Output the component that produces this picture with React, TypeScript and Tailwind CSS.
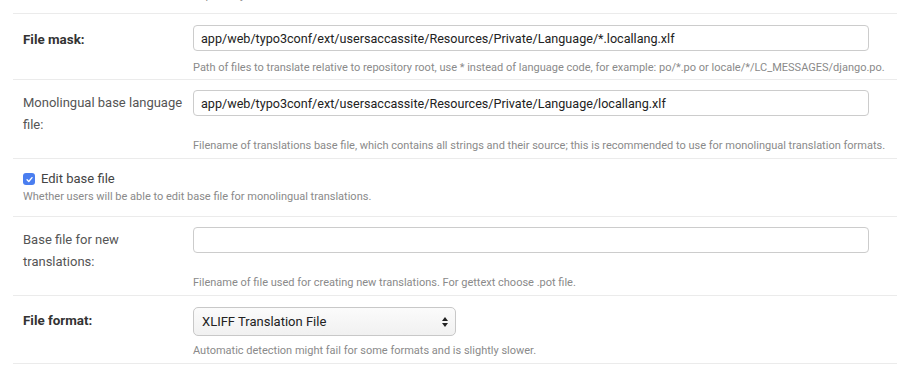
import React from 'react';

const font = { fontFamily: 'Roboto, "Liberation Sans", sans-serif' };

const Help: React.FC<{ children: React.ReactNode }> = ({ children }) => (
  <p className="whitespace-nowrap text-[11px] leading-[14px] text-[#8a8a8a]">{children}</p>
);

const TextField: React.FC<{ value?: string }> = ({ value = '' }) => (
  <input
    readOnly
    value={value}
    className="h-[26px] w-[676px] rounded-[4px] border border-[#cccccc] bg-white px-[7px] text-[12.6px] text-[#222] outline-none"
  />
);

type RowProps = {
  label: string;
  bold?: boolean;
  help: string;
  control: React.ReactNode;
  className?: string;
};

const Row: React.FC<RowProps> = ({ label, bold, help, control, className = '' }) => (
  <div className={`grid grid-cols-[170px_1fr] border-b border-[#ebebeb] pl-[10px] ${className}`}>
    <label
      className={`pr-[2px] leading-[22px] ${bold ? 'text-[13.4px] font-bold text-[#333]' : 'text-[13px] text-[#555]'}`}
    >
      {label}
    </label>
    <div>{control}</div>
    <div />
    <Help>{help}</Help>
  </div>
);

export default function App() {
  return (
    <div className="h-[373px] w-[897px] overflow-hidden bg-white" style={font}>
      <div className="ml-[13px]">
        {/* row above, mostly scrolled out of view */}
        <div className="h-[14px] overflow-hidden border-b border-[#ebebeb] pl-[180px]">
          <div className="-mt-[11px]">
            <Help>Repository branch to translate.</Help>
          </div>
        </div>

        <Row
          bold
          label="File mask:"
          className="h-[66px] pt-[11px] [&>label]:pt-[4px] [&>p]:pt-[5px]"
          control={<TextField value="app/web/typo3conf/ext/usersaccassite/Resources/Private/Language/*.locallang.xlf" />}
          help="Path of files to translate relative to repository root, use * instead of language code, for example: po/*.po or locale/*/LC_MESSAGES/django.po."
        />

        <Row
          label="Monolingual base language file:"
          className="h-[79px] pt-[10px] [&>label]:pt-[2px] [&>p]:-mt-[2px]"
          control={<TextField value="app/web/typo3conf/ext/usersaccassite/Resources/Private/Language/locallang.xlf" />}
          help="Filename of translations base file, which contains all strings and their source; this is recommended to use for monolingual translation formats."
        />

        <div className="h-[58px] border-b border-[#ebebeb] pl-[10px] pt-[9px]">
          <div className="flex items-center gap-[6px]">
            <span className="flex h-[12px] w-[12px] items-center justify-center rounded-[3px] bg-[#4a7ef0]">
              <svg viewBox="0 0 10 10" className="h-[9px] w-[9px]">
                <path d="M2.3 5.3 L4.2 7.2 L7.8 2.9" fill="none" stroke="white" strokeWidth="1.5" strokeLinecap="round" strokeLinejoin="round" />
              </svg>
            </span>
            <span className="text-[13px] leading-[22px] text-[#444]">Edit base file</span>
          </div>
          <Help>Whether users will be able to edit base file for monolingual translations.</Help>
        </div>

        <Row
          label="Base file for new translations:"
          className="h-[79px] pt-[10px] [&>label]:pt-[2px] [&>p]:-mt-[2px]"
          control={<TextField />}
          help="Filename of file used for creating new translations. For gettext choose .pot file."
        />

        <Row
          bold
          label="File format:"
          className="h-[68px] pt-[11px] [&>label]:pt-[3px] [&>p]:pt-[2px]"
          control={
            <div className="flex h-[29px] w-[263px] items-center justify-between rounded-[5px] border border-[#c8c8c8] bg-gradient-to-b from-[#fbfbfb] to-[#f1f1f1] pl-[8px] pr-[6px] text-[13px] text-[#222]">
              <span>XLIFF Translation File</span>
              <svg viewBox="0 0 8 12" className="h-[12px] w-[8px]">
                <path d="M4 1 L7 5 H1 Z" fill="#222" />
                <path d="M4 11 L7 7 H1 Z" fill="#222" />
              </svg>
            </div>
          }
          help="Automatic detection might fail for some formats and is slightly slower."
        />
      </div>
    </div>
  );
}
